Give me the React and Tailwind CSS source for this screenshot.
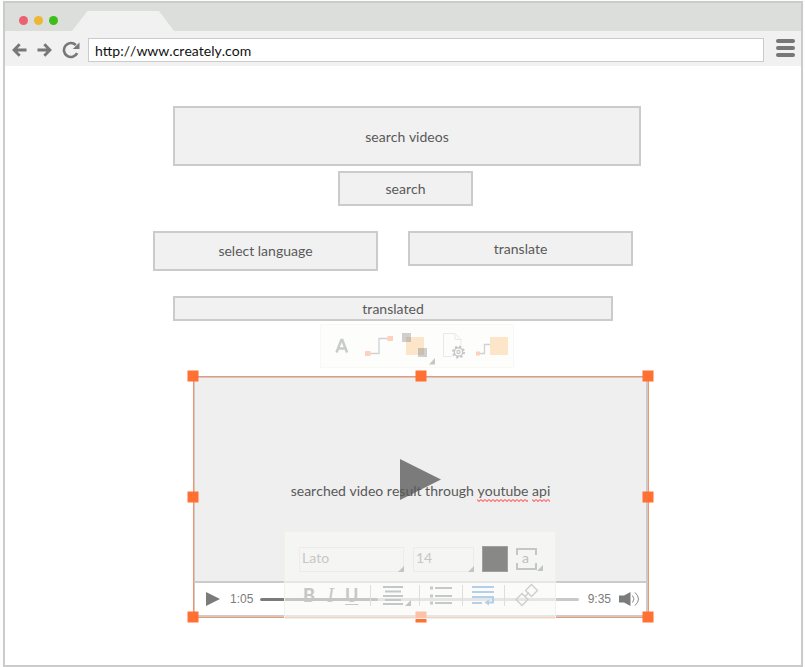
const boxStyle = "border-2 border-[#cbcbcb] bg-[#f1f1f1] text-center text-sm text-[#595959]";

function TitleBar() {
  return (
    <header className="flex h-7 items-end bg-[#dcdedb] pl-[14px]">
      <div className="mb-[6px] flex gap-[6px]">
        <span className="size-[9px] rounded-full bg-[#ec6070]" />
        <span className="size-[9px] rounded-full bg-[#ecb733]" />
        <span className="size-[9px] rounded-full bg-[#3bbd1b]" />
      </div>
      <svg className="ml-[14px]" width="102" height="20" viewBox="0 0 102 20" aria-hidden="true">
        <path d="M0 20L15.500 0H87L102 20Z" fill="#f1f1f1" />
      </svg>
    </header>
  );
}

function AddressBar() {
  return (
    <nav className="flex h-[35px] items-center bg-[#f1f1f1] pt-[3px] pr-[6px] pl-[7px] text-[#777]">
      <button aria-label="Back" className="mr-[9px]">
        <svg width="16" height="16" viewBox="0 0 16 16" fill="none" stroke="currentColor" strokeWidth="2.800">
          <path d="M14.500 8H2.500M7.700 2.200L2 8l5.700 5.800" />
        </svg>
      </button>
      <button aria-label="Forward" className="mr-[9px]">
        <svg width="16" height="16" viewBox="0 0 16 16" fill="none" stroke="currentColor" strokeWidth="2.800">
          <path d="M.500 8h12M7.300 2.200L13 8l-5.700 5.800" />
        </svg>
      </button>
      <button aria-label="Reload" className="mr-2">
        <svg width="18" height="18" viewBox="0 0 18 18" fill="none">
          <path d="M15.200 12.200A7 7 0 1 1 13.800 4" stroke="currentColor" strokeWidth="2.600" />
          <path d="M17.500 1.500V8H10.800Z" fill="currentColor" />
        </svg>
      </button>
      <input
        aria-label="Address"
        type="text"
        defaultValue="http://www.creately.com"
        className="h-6 min-w-0 flex-1 border border-[#cbcbcb] bg-white px-[6px] text-sm text-[#111] outline-none"
      />
      <button aria-label="Menu" className="ml-3 flex flex-col gap-[3px] pb-1">
        <span className="h-1 w-[19px] rounded-full bg-[#777]" />
        <span className="h-1 w-[19px] rounded-full bg-[#777]" />
        <span className="h-1 w-[19px] rounded-full bg-[#777]" />
      </button>
    </nav>
  );
}

function Misspelled({ children, id }) {
  return (
    <span className="relative">
      {children}
      <svg className="absolute top-full left-0 h-[3px] w-full" aria-hidden="true">
        <pattern id={id} width="4" height="3" patternUnits="userSpaceOnUse">
          <path d="M0 .500L2 2.500L4 .500" fill="none" stroke="#f77" strokeWidth="1.200" />
        </pattern>
        <rect width="100%" height="3" fill={`url(#${id})`} />
      </svg>
    </span>
  );
}

function Corner() {
  return (
    <svg className="pointer-events-none absolute right-0 bottom-0" width="6" height="6" viewBox="0 0 6 6" aria-hidden="true">
      <path d="M6 0V6H0Z" fill="#c3c4c3" />
    </svg>
  );
}

function ShapeToolbar() {
  return (
    <div className="absolute -top-[52px] left-[127px] flex h-11 w-[194px] items-start border border-[#f9f9f4] bg-[#fdfdfb] pt-2">
      <button aria-label="Text style" className="ml-[14px] h-7 w-[14px] text-[#c9cbcd]">
        <svg width="14" height="28" viewBox="0 0 14 28" fill="none" stroke="currentColor" strokeWidth="2.500">
          <path d="M1.500 19.500L6.300 7h1l4.800 12.500M3.500 15.500h7" />
        </svg>
      </button>
      <button aria-label="Connector" className="ml-[16px]">
        <svg width="29" height="28" viewBox="0 0 29 28">
          <path d="M5 20.500H14V5.500H24" fill="none" stroke="#cfd1d3" strokeWidth="1.300" />
          <path d="M0 18h5.500v5H0ZM22.500 3H28v5h-5.500Z" fill="#ffd0bd" />
        </svg>
      </button>
      <button aria-label="Arrange" className="ml-[8px]">
        <svg width="34" height="32" viewBox="0 0 34 32">
          <path d="M4 4h18v18H4Z" fill="#fce5c8" />
          <path d="M0 0h9v9H0ZM16 15h9v9h-9Z" fill="#cfcfcf" />
          <path d="M4 4h5V9H4ZM16 15h6v7h-6Z" fill="#cbc0b0" />
          <path d="M33 25v6.500H27Z" fill="#c6c6c6" />
        </svg>
      </button>
      <button aria-label="Shape settings" className="ml-[7px]">
        <svg width="23" height="28" viewBox="0 0 23 28" fill="none">
          <path d="M9 23.500H.500V.500H12L18 6.500V12M12 .500V6.500H18" stroke="#e8e9e9" />
          <circle cx="15.500" cy="19" r="5.300" stroke="#c5c7c9" strokeWidth="2.400" strokeDasharray="2.080 2.080" />
          <circle cx="15.500" cy="19" r="4.200" fill="#fdfdfb" stroke="#c5c7c9" strokeWidth="1.400" />
          <circle cx="15.500" cy="19" r="1.600" stroke="#c5c7c9" strokeWidth="1.200" />
        </svg>
      </button>
      <button aria-label="Add connected shape" className="ml-[10px]">
        <svg width="32" height="28" viewBox="0 0 32 28">
          <path d="M4 20.500H8.500V11.500H14" fill="none" stroke="#cfd1d3" strokeWidth="1.300" />
          <path d="M0 18.500h4v4H0Z" fill="#ffd0bd" />
          <path d="M14 4h18v18H14Z" fill="#fce5c8" />
        </svg>
      </button>
    </div>
  );
}

function Divider() {
  return <span className="h-[21px] w-px bg-[#dededc]" />;
}

function TextToolbar() {
  return (
    <div className="absolute top-[155px] left-[91px] h-[88px] w-[272px] border border-[#f1f1ec] bg-[#f9f9f5]/60 pt-[14px] pl-[14px] text-[#c6c7c7]">
      <div className="flex h-[26px] items-center">
        <div className="relative h-[25px] w-[105px]">
          <select aria-label="Font" className="block h-full w-full appearance-none border border-[#ececea] bg-transparent pb-1 pl-[2px] text-sm outline-none">
            <option>Lato</option>
          </select>
          <Corner />
        </div>
        <div className="relative ml-[9px] h-[25px] w-[61px]">
          <select aria-label="Font size" className="block h-full w-full appearance-none border border-[#ececea] bg-transparent pb-1 pl-[2px] text-sm outline-none">
            <option>14</option>
          </select>
          <Corner />
        </div>
        <button aria-label="Text colour" className="ml-2 size-[26px] border border-[#a0a09e] bg-[#888886]" />
        <button aria-label="Text position" className="relative ml-2 h-6 w-[27px]">
          <svg width="21" height="24" viewBox="0 0 21 24" fill="none" stroke="#c3c7c9" strokeWidth="2" aria-hidden="true">
            <path d="M1 8V2H20V8M1 16V22H20V16" />
          </svg>
          <span className="absolute top-[1px] left-[6px] text-sm leading-5 text-[#bdbfbf]">a</span>
          <Corner />
        </button>
      </div>
      <div className="mt-3 flex h-[22px] items-center">
        <button className="ml-1 w-3 text-lg leading-5 font-black">B</button>
        <button className="ml-[11px] w-[9px] font-['Liberation_Serif',serif] text-xl leading-5 italic">I</button>
        <button className="ml-[10px] w-[13px] text-lg leading-5 font-bold underline decoration-1 underline-offset-2">U</button>
        <span className="w-3" />
        <Divider />
        <button aria-label="Alignment" className="relative ml-[11px] h-[22px] w-[29px]">
          <svg width="22" height="22" viewBox="0 0 22 22" stroke="#c3c7c7" strokeWidth="2" aria-hidden="true">
            <path d="M1 3H21M3 7.500H19M1 12H21M3 16H19M1 20H21" />
          </svg>
          <Corner />
        </button>
        <span className="w-2" />
        <Divider />
        <button aria-label="Bulleted list" className="ml-[10px]">
          <svg width="22" height="22" viewBox="0 0 22 22" stroke="#c6c9c9" strokeWidth="2" aria-hidden="true">
            <path d="M5 4H22M5 12H22M5 19H22" />
            <path d="M0 4H3M0 12H3M0 19H3" strokeWidth="3" />
          </svg>
        </button>
        <span className="w-[10px]" />
        <Divider />
        <button aria-label="Wrap text" className="ml-[9px]">
          <svg width="23" height="22" viewBox="0 0 23 22" fill="none" stroke="#b4cfec" strokeWidth="2" aria-hidden="true">
            <path d="M0 3H22M0 8H22M0 13H21V18.500H15M0 19H10" />
            <path d="M17 15.500V21.500L12.500 18.500Z" fill="#b4cfec" stroke="none" />
          </svg>
        </button>
        <span className="w-[9px]" />
        <Divider />
        <button aria-label="Link" className="ml-[10px]">
          <svg width="24" height="24" viewBox="0 0 24 24" fill="none" stroke="#cccecd" strokeWidth="1.300" aria-hidden="true">
            <path d="M7 10.500L13 16.500L7 22.500L1 16.500ZM16.500 1.500L22.500 7.500L16.500 13.500L10.500 7.500ZM9.500 14L14 9.500" />
          </svg>
        </button>
      </div>
    </div>
  );
}

const handles = [
  "left-0 top-0",
  "left-1/2 top-0",
  "left-full top-0",
  "left-0 top-1/2",
  "left-full top-1/2",
  "left-0 top-full",
  "left-1/2 top-full",
  "left-full top-full",
];

function Selection() {
  return (
    <div className="pointer-events-none absolute inset-0">
      <div className="absolute top-0 -right-px -bottom-px left-0 border border-[#f4936c]" />
      {handles.map((place) => (
        <span key={place} className={`absolute size-[11px] -translate-x-1/2 -translate-y-1/2 bg-[#ff7032] ${place}`} />
      ))}
    </div>
  );
}

function VideoPlayer() {
  return (
    <figure className="relative mt-[55px] mr-[5px] ml-10">
      <div className="border-2 border-[#cbcbcb] bg-white">
        <div className="relative flex h-[205px] items-center justify-center border-b-2 border-[#cbcbcb] bg-[#efefef]">
          <button aria-label="Play video">
            <svg width="41" height="41" viewBox="0 0 41 41">
              <path d="M0 0L41 20.500L0 41Z" fill="#7b7b7b" />
            </svg>
          </button>
          <figcaption className="absolute inset-x-0 top-[103px] text-center text-sm text-[#595959]">
            searched video result through <Misspelled id="wave-a">youtube</Misspelled> <Misspelled id="wave-b">api</Misspelled>
          </figcaption>
        </div>
        <div className="flex h-8 items-center pr-[6px] pl-[11px] font-['Liberation_Sans',Arial,sans-serif] text-xs text-[#7b7b7b]">
          <button aria-label="Play">
            <svg width="14" height="14" viewBox="0 0 14 14">
              <path d="M0 0L14 7L0 14Z" fill="#7b7b7b" />
            </svg>
          </button>
          <span className="ml-[10px]">1:05</span>
          <div className="mr-[9px] ml-[7px] flex h-[3px] flex-1 overflow-hidden rounded-full bg-[#c9c9c9]">
            <span className="w-[37%] rounded-full bg-[#7b7b7b]" />
          </div>
          <span className="mr-2">9:35</span>
          <button aria-label="Volume">
            <svg width="21" height="16" viewBox="0 0 21 16" fill="none">
              <path d="M0 4.500H5L11.500 1V15L5 11.500H0Z" fill="#7b7b7b" />
              <path d="M13.500 4.500Q16.500 8 13.500 11.500M16 1.500Q23 8 16 14.500" stroke="#8b8b8b" />
            </svg>
          </button>
        </div>
      </div>
      <Selection />
      <ShapeToolbar />
      <TextToolbar />
    </figure>
  );
}

export default function App() {
  return (
    <div className="bg-[#fdfdfd] pt-px pr-[2px] pl-[3px] font-[Lato,sans-serif] [font-kerning:none]">
      <div className="border-2 border-[#cbcbcb] bg-white">
        <TitleBar />
        <AddressBar />
        <main className="mx-auto max-w-[500px] pt-10 pb-12">
          <form className="mr-3 ml-5" onSubmit={(e) => e.preventDefault()}>
            <input aria-label="Search videos" type="text" defaultValue="search videos" className={`block h-[60px] w-full outline-none ${boxStyle}`} />
            <button className={`mt-[5px] ml-[165px] block h-[35px] w-[135px] ${boxStyle}`}>search</button>
          </form>
          <div className="mt-[25px] mr-5 flex items-start gap-[30px]">
            <select aria-label="Language" className={`h-10 min-w-0 flex-1 appearance-none outline-none ${boxStyle}`}>
              <option>select language</option>
            </select>
            <button className={`h-[35px] min-w-0 flex-1 ${boxStyle}`}>translate</button>
          </div>
          <output className={`mt-[25px] mr-10 ml-5 block h-[25px] leading-[22px] ${boxStyle}`}>translated</output>
          <VideoPlayer />
        </main>
      </div>
    </div>
  );
}
